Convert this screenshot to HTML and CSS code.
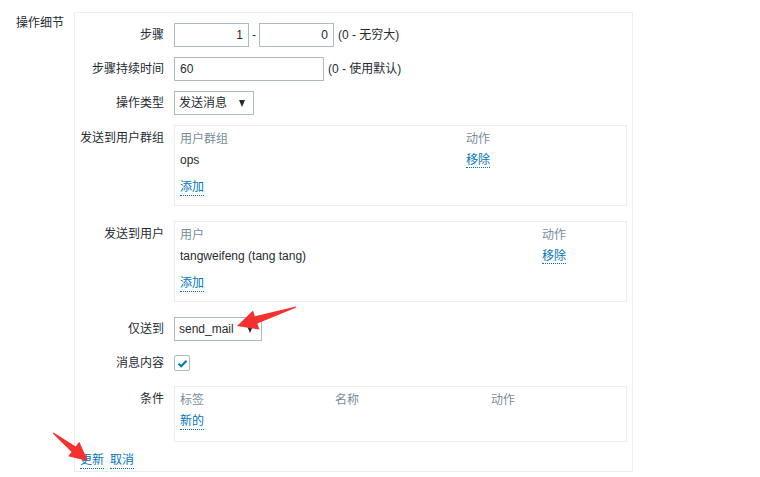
FILE: index.html
```html
<!DOCTYPE html>
<html lang="zh-CN">
<head>
<meta charset="utf-8">
<title>操作细节</title>
<link rel="stylesheet" href="styles.css">
</head>
<body>
<div class="page">
  <div class="side">操作细节</div>
  <div class="box">
    <div class="row">
      <div class="lbl">步骤</div>
      <div class="field">
        <input class="inp num" type="text" value="1">
        <span class="dash">-</span>
        <input class="inp num" type="text" value="0">
        <span class="hint">(0 - 无穷大)</span>
      </div>
    </div>
    <div class="row">
      <div class="lbl">步骤持续时间</div>
      <div class="field">
        <input class="inp wide" type="text" value="60">
        <span class="hint">(0 - 使用默认)</span>
      </div>
    </div>
    <div class="row">
      <div class="lbl">操作类型</div>
      <div class="field">
        <div class="select s1"><span>发送消息</span><span class="tri"></span></div>
      </div>
    </div>
    <div class="row top">
      <div class="lbl">发送到用户群组</div>
      <div class="tbl">
        <div class="trow head c-group"><span>用户群组</span><span>动作</span></div>
        <div class="trow c-group"><span>ops</span><span><a class="lnk">移除</a></span></div>
        <div class="trow add"><a class="lnk">添加</a></div>
      </div>
    </div>
    <div class="row top wide-gap">
      <div class="lbl">发送到用户</div>
      <div class="tbl">
        <div class="trow head c-user"><span>用户</span><span>动作</span></div>
        <div class="trow c-user"><span>tangweifeng (tang tang)</span><span><a class="lnk">移除</a></span></div>
        <div class="trow add"><a class="lnk">添加</a></div>
      </div>
    </div>
    <div class="row wide-gap">
      <div class="lbl">仅送到</div>
      <div class="field">
        <div class="select s2"><span>send_mail</span><span class="tri"></span></div>
      </div>
    </div>
    <div class="row chk-row">
      <div class="lbl">消息内容</div>
      <div class="field">
        <span class="chk"><svg width="13" height="13" viewBox="0 0 13 13"><path d="M2.5 6.8 L5.2 9.3 L10.5 3.8" fill="none" stroke="#0275b8" stroke-width="2"/></svg></span>
      </div>
    </div>
    <div class="row top wide-gap">
      <div class="lbl">条件</div>
      <div class="tbl cond">
        <div class="trow head c-cond"><span>标签</span><span>名称</span><span>动作</span></div>
        <div class="trow"><a class="lnk">新的</a></div>
      </div>
    </div>
    <div class="buttons">
      <a class="lnk">更新</a>
      <a class="lnk">取消</a>
    </div>
  </div>
</div>
<svg class="marks" width="760" height="477" viewBox="0 0 760 477">
  <polygon fill="#f5312f" points="237,326 253,310.5 254.8,316.3 296,306.5 296.3,307.6 257.3,323.6 259.5,329.5"/>
  <polygon fill="#f5312f" points="88,461 79.2,441.8 75.8,446.4 53.5,432.6 52.8,433.4 71.6,452 68.2,456.2"/>
</svg>
</body>
</html>
```
FILE: styles.css
```css
* { box-sizing: border-box; }
html, body { margin: 0; padding: 0; background: #fff; }
body {
  font-family: "Liberation Sans", Arial, "Noto Sans CJK SC", sans-serif;
  font-size: 12px;
  color: #1f2c33;
  line-height: 16px;
  width: 760px;
  height: 477px;
  overflow: hidden;
  position: relative;
}
.page { display: flex; padding-top: 12px; }
.side { width: 74px; padding-left: 16px; padding-top: 3px; }
.box {
  width: 559px;
  height: 460px;
  border: 1px solid #ebeef0;
  padding: 10px 5px 0 0;
  display: flex;
  flex-direction: column;
  gap: 10px;
}
.row { display: flex; align-items: center; gap: 10px; }
.row.top { align-items: flex-start; }
.row.top .lbl { padding-top: 5px; }
.row.wide-gap { margin-top: 5px; }
.row.chk-row { margin-top: 4px; }
.lbl { width: 89px; text-align: right; white-space: nowrap; }
.field { display: flex; align-items: center; }
.inp {
  height: 24px;
  border: 1px solid #acbbc2;
  padding: 0 5px;
  font: inherit;
  color: #1f2c33;
  background: #fff;
  outline: none;
  margin: 0;
}
.inp.num { width: 75px; text-align: right; }
.inp.wide { width: 150px; }
.dash { margin: 0 3px; width: 4px; text-align: center; }
.hint { margin-left: 4px; }
.select {
  height: 24px;
  border: 1px solid #acbbc2;
  display: flex;
  align-items: center;
  justify-content: space-between;
  padding: 0 8px 0 4px;
}
.s1 { width: 80px; }
.s2 { width: 88px; }
.tri {
  width: 0; height: 0;
  border-left: 3.5px solid transparent;
  border-right: 3.5px solid transparent;
  border-top: 7px solid #1f2c33;
}
.chk {
  width: 16px; height: 16px;
  border: 1px solid #acbbc2;
  border-radius: 2px;
  display: flex; align-items: center; justify-content: center;
}
.chk svg { display: block; }
.tbl {
  width: 453px;
  border: 1px solid #ebeef0;
  padding: 5px 5px 10px;
}
.tbl.cond { padding-bottom: 12px; }
.trow { display: grid; height: 16px; margin-top: 5px; }
.trow.head { margin-top: 0; color: #768d99; }
.trow.add { margin-top: 11px; }
.c-group { grid-template-columns: 286px 1fr; }
.c-user { grid-template-columns: 362px 1fr; }
.c-cond { grid-template-columns: 155px 156px 1fr; }
.lnk {
  color: #0275b8;
  border-bottom: 1px dotted #0275b8;
  text-decoration: none;
  cursor: pointer;
}
.trow > .lnk { justify-self: start; }
.buttons { display: flex; gap: 6px; padding-left: 5px; margin-top: 0; }
.marks { position: absolute; left: 0; top: 0; pointer-events: none; }
```
